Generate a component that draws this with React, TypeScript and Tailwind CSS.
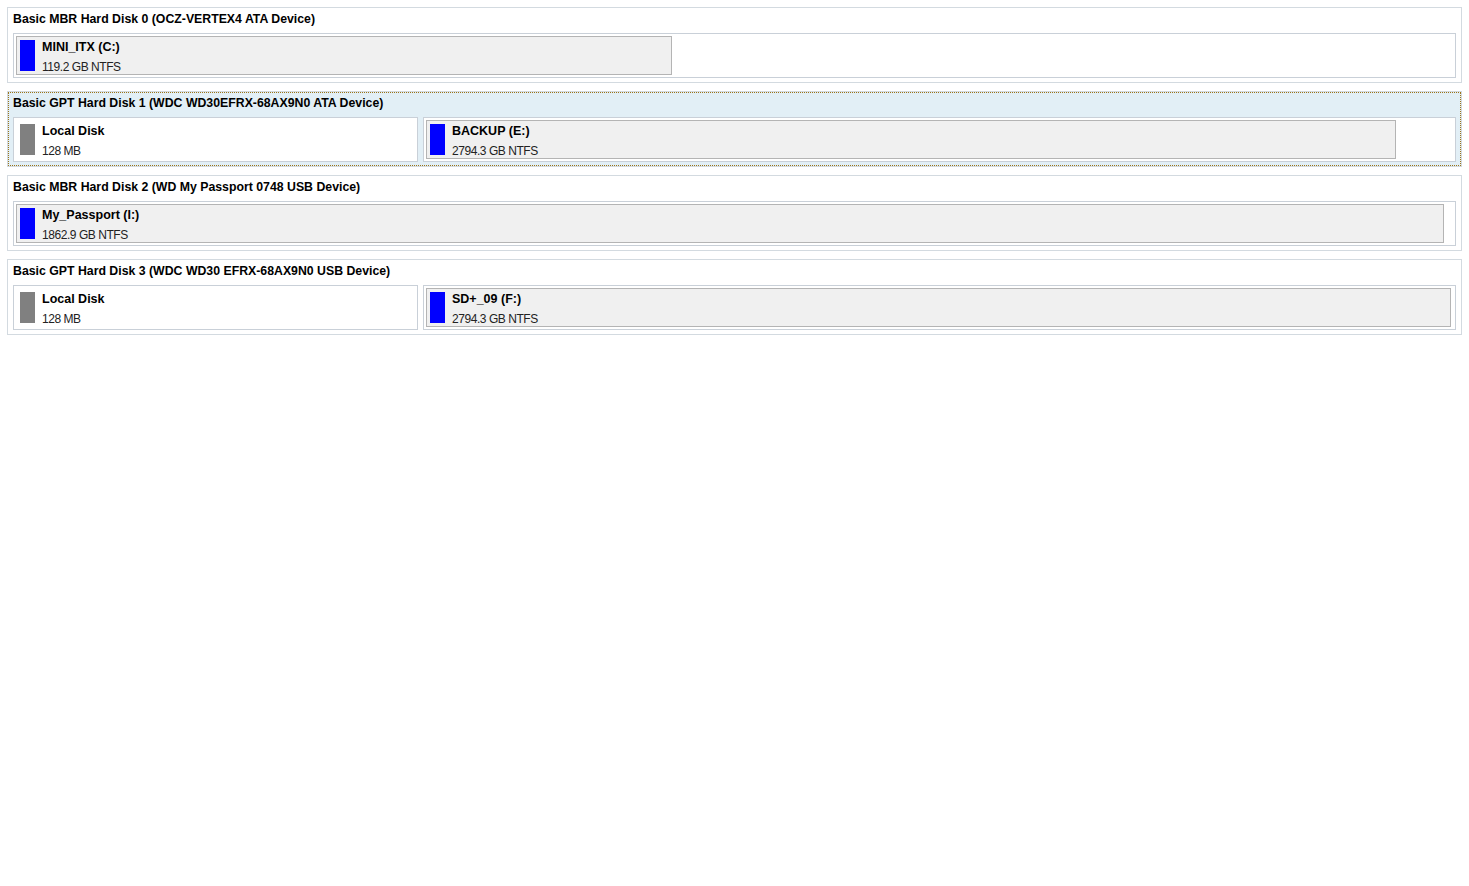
type Part = {
  name: string;
  info: string;
  kind: "vol" | "sys";
  slot?: number;
  fill?: number;
};

type Disk = {
  title: string;
  selected?: boolean;
  parts: Part[];
};

const disks: Disk[] = [
  {
    title: "Basic MBR Hard Disk 0 (OCZ-VERTEX4 ATA Device)",
    parts: [{ name: "MINI_ITX (C:)", info: "119.2 GB NTFS", kind: "vol", fill: 656 }],
  },
  {
    title: "Basic GPT Hard Disk 1 (WDC WD30EFRX-68AX9N0 ATA Device)",
    selected: true,
    parts: [
      { name: "Local Disk", info: "128 MB", kind: "sys", slot: 405 },
      { name: "BACKUP (E:)", info: "2794.3 GB NTFS", kind: "vol", fill: 970 },
    ],
  },
  {
    title: "Basic MBR Hard Disk 2 (WD My Passport 0748 USB Device)",
    parts: [{ name: "My_Passport (I:)", info: "1862.9 GB NTFS", kind: "vol", fill: 1428 }],
  },
  {
    title: "Basic GPT Hard Disk 3 (WDC WD30 EFRX-68AX9N0 USB Device)",
    parts: [
      { name: "Local Disk", info: "128 MB", kind: "sys", slot: 405 },
      { name: "SD+_09 (F:)", info: "2794.3 GB NTFS", kind: "vol", fill: 1025 },
    ],
  },
];

function Label({ part }: { part: Part }) {
  return (
    <div className="flex h-full items-start gap-[7px] pl-[3px] pt-[3px]">
      <div className={part.kind === "vol" ? "h-[31px] w-[15px] bg-[#0000ff]" : "h-[31px] w-[15px] bg-[#808080]"} />
      <div className="flex flex-col">
        <span className="text-[12.5px] leading-[14px] font-bold text-black">{part.name}</span>
        <span className="mt-[6px] text-[12px] leading-[14px] tracking-[-0.45px] text-[#222]">{part.info}</span>
      </div>
    </div>
  );
}

function Slot({ part, last }: { part: Part; last: boolean }) {
  return (
    <div
      className={`h-[45px] border border-[#c9d0d8] bg-white p-[2px] ${last ? "flex-1" : "shrink-0"}`}
      style={part.slot ? { width: part.slot } : undefined}
    >
      {part.kind === "sys" ? (
        <div className="pl-[1px] pt-[1px]">
          <Label part={part} />
        </div>
      ) : (
        <div className="h-full border border-[#b4b4b4] bg-[#f0f0f0]" style={{ width: part.fill }}>
          <Label part={part} />
        </div>
      )}
    </div>
  );
}

function DiskCard({ disk }: { disk: Disk }) {
  const sel = !!disk.selected;
  const title = (
    <div className={sel ? "h-[24px] pl-[4px] pt-[2px] text-[12.3px] leading-[16px] font-bold text-black" : "h-[25px] pl-[5px] pt-[3px] text-[12.3px] leading-[16px] font-bold text-black"}>
      {disk.title}
    </div>
  );
  const row = (
    <div className={sel ? "flex gap-[5px] px-[4px]" : "flex gap-[5px] px-[5px]"}>
      {disk.parts.map((p, i) => (
        <Slot key={p.name + i} part={p} last={i === disk.parts.length - 1} />
      ))}
    </div>
  );
  if (sel) {
    return (
      <div className="h-[76px] border border-[#d3dae0] bg-white">
        <div className="h-[74px] border border-dotted border-[#9c7418] bg-[#e2eff6]">
          {title}
          {row}
        </div>
      </div>
    );
  }
  return (
    <div className="h-[76px] border border-[#d3dae0] bg-white">
      {title}
      {row}
    </div>
  );
}

export default function App() {
  return (
    <div
      className="min-h-[886px] w-full bg-white pl-[7px] pr-[7px] pt-[7px]"
      style={{ fontFamily: '"Liberation Sans", Arial, sans-serif' }}
    >
      <div className="flex flex-col gap-[8px]">
        {disks.map((d) => (
          <DiskCard key={d.title} disk={d} />
        ))}
      </div>
    </div>
  );
}
